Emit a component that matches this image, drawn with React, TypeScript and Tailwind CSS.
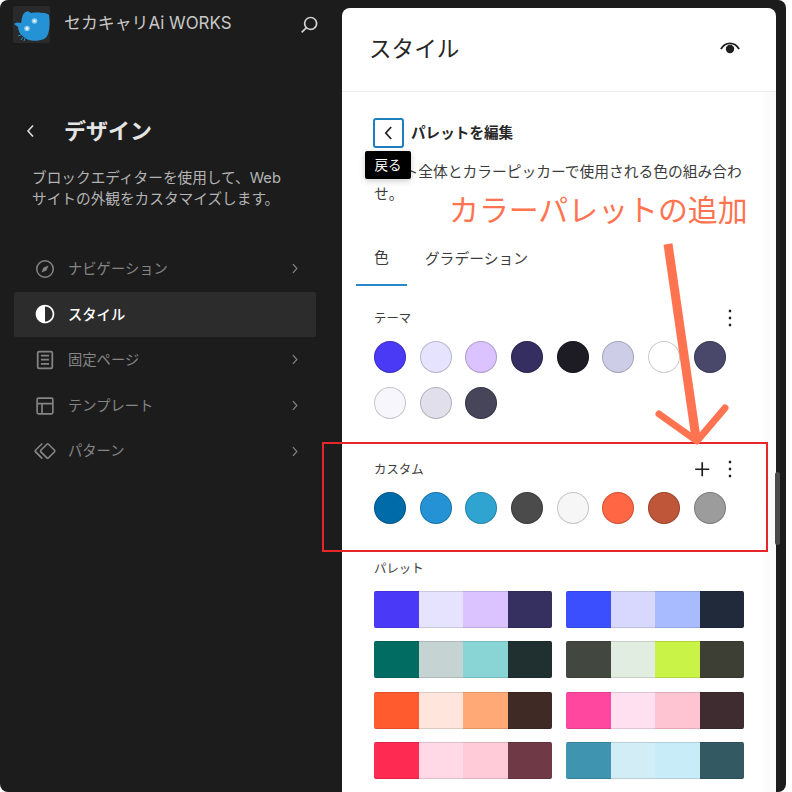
import React from "react";

const P = ({ d, className = "" }: { d: string; className?: string }) => (
  <svg viewBox="0 0 24 24" className={className} fill="currentColor" fillRule="evenodd"><path d={d} /></svg>
);

const CL = "M14.6 7l-1.2-1L8 12l5.4 6 1.2-1-4.6-5z";
const CR = "M10.6 6L9.4 7l4.6 5-4.6 5 1.2 1 5.4-6z";
const MORE = "M13 19h-2v-2h2v2zm0-6h-2v-2h2v2zm0-6h-2V5h2v2z";
const PLUS = "M11 12.5V18H12.5V12.5H18V11H12.5V5.5H11V11H5.5V12.5H11Z";

const navIcons: Record<string, React.ReactNode> = {
  nav: (
    <svg viewBox="0 0 24 24" className="w-6 h-6" fill="none" stroke="currentColor" strokeWidth="1.5">
      <circle cx="12" cy="12" r="8.25" />
      <path d="M15.6 8.4L13.4 13.4L8.4 15.6L10.6 10.6Z" fill="currentColor" stroke="none" />
    </svg>
  ),
  style: <P className="w-7 h-7" d="M12 4c-4.4 0-8 3.6-8 8s3.6 8 8 8 8-3.6 8-8-3.6-8-8-8zm0 14.5c3.6 0 6.5-2.9 6.5-6.5S15.6 5.5 12 5.5v13z" />,
  page: <P className="w-7 h-7" d="M15.5 7.5h-7V9h7V7.5Zm-7 3.5h7v1.5h-7V11Zm7 3.5h-7V16h7v-1.5ZM17 4H7a2 2 0 0 0-2 2v12a2 2 0 0 0 2 2h10a2 2 0 0 0 2-2V6a2 2 0 0 0-2-2Zm-10 1.5h10a.5.5 0 0 1 .5.5v12a.5.5 0 0 1-.5.5H7a.5.5 0 0 1-.5-.5V6a.5.5 0 0 1 .5-.5Z" />,
  layout: <P className="w-[26px] h-[26px]" d="M18 5.5H6a.5.5 0 00-.5.5v3h13V6a.5.5 0 00-.5-.5zm.5 5H10v8h8a.5.5 0 00.5-.5v-7.5zm-10 0h-3V18a.5.5 0 00.5.5h2.5v-8zM6 4h12a2 2 0 012 2v12a2 2 0 01-2 2H6a2 2 0 01-2-2V6a2 2 0 012-2z" />,
  pattern: <P className="w-[26px] h-[26px]" d="M21.3 10.8l-5.6-5.6c-.7-.7-1.8-.7-2.5 0l-5.6 5.6c-.7.7-.7 1.8 0 2.5l5.6 5.6c.3.3.8.5 1.2.5s.9-.2 1.2-.5l5.6-5.6c.8-.7.8-1.9.1-2.5zm-1 1.4l-5.6 5.6c-.1.1-.3.1-.4 0l-5.6-5.6c-.1-.1-.1-.3 0-.4l5.6-5.6s.1-.1.2-.1.1 0 .2.1l5.6 5.6c.1.1.1.3 0 .4zm-16.6-.4L10 5.5l-1-1-6.3 6.3c-.7.7-.7 1.8 0 2.5L9 19.5l1.1-1.1-6.3-6.3c-.2 0-.2-.2-.1-.3z" />,
};

const nav = [
  { k: "nav", t: "ナビゲーション" },
  { k: "style", t: "スタイル", active: true },
  { k: "page", t: "固定ページ" },
  { k: "layout", t: "テンプレート" },
  { k: "pattern", t: "パターン" },
];

const theme = ["#4a3af5", "#e6e3fe", "#dac3ff", "#352f61", "#1d1c24", "#cdcde8", "#ffffff", "#49476a", "#f6f6fc", "#e0dfeb", "#46455a"];
const custom = ["#006ba9", "#2492d4", "#2fa4d1", "#4b4b4b", "#f6f6f6", "#ff6643", "#c05639", "#9c9c9c"];
const palettes = [
  ["#4a3af7", "#e6e3fe", "#dac3ff", "#35305f"],
  ["#3c4fff", "#d8d8ff", "#a9bbff", "#212a3b"],
  ["#016d62", "#c5d4d3", "#89d4d5", "#202f2f"],
  ["#42483f", "#e2ede1", "#c9f346", "#3d3e34"],
  ["#ff5b2e", "#ffe5db", "#ffa976", "#3f2a25"],
  ["#ff479f", "#ffe0f1", "#ffc4d1", "#3e2c31"],
  ["#ff2a52", "#ffd9e5", "#ffcbd8", "#6f3945"],
  ["#3f95b0", "#d2edf6", "#c8edf8", "#335962"],
];

const Swatches = ({ colors }: { colors: string[] }) => (
  <div className="flex flex-wrap gap-x-[13.7px] gap-y-[14px] mt-[11px]">
    {colors.map((c, i) => (
      <div key={i} className="w-8 h-8 rounded-full shadow-[inset_0_0_0_1px_rgba(0,0,0,0.2)]" style={{ backgroundColor: c }} />
    ))}
  </div>
);

const SectionHead = ({ label, plus, more = true }: { label: string; plus?: boolean; more?: boolean }) => (
  <div className="flex items-center justify-between h-6 text-[#3c3c3c]">
    <span className="text-[12.4px] leading-6 pt-[2px]">{label}</span>
    <div className="flex items-center text-[#1e1e1e]">
      {plus && <P className="w-[27px] h-[27px]" d={PLUS} />}
      {more && <P className="w-7 h-7" d={MORE} />}
    </div>
  </div>
);

export default function App() {
  return (
    <div className="relative w-[792px] h-[792px] bg-white overflow-hidden font-['Inter','Noto_Sans_CJK_JP',sans-serif]">
      <div className="w-[786px] h-[792px] rounded-[8px] bg-[#1c1c1c] flex">
        <aside className="w-[342px] shrink-0">
          <div className="h-[48px] flex items-center pl-[13px] pr-[19px]">
            <div className="w-[37px] h-[37px] rounded-[2px] bg-[#2a2a2a] shrink-0">
              <svg viewBox="0 0 37 37" className="w-full h-full">
                <path d="M10 8.5 Q14 3 18 7 C24 6 34 6.5 36 9 C37.5 20 36 31 31 33 C24 36 14 35 11 31 C7 29 5 24 5 21 L1 18 Q3 15.5 8 17 Q9 11 10 8.5Z" fill="#2492d4" />
                <circle cx="21.5" cy="15" r="2.8" fill="#8fcdf0" />
                <circle cx="21.5" cy="15" r="1.2" fill="#fff" />
                <circle cx="14" cy="22.5" r="2.8" fill="#8fcdf0" />
                <circle cx="14" cy="22.5" r="1.2" fill="#fff" />
                <path d="M8 29 L5 30 M10 31 L8 34 M12 32 L11 35" stroke="#2492d4" strokeWidth="1" />
              </svg>
            </div>
            <span className="ml-[14px] text-[16.9px] text-[#c8c8c8] whitespace-nowrap">セカキャリAi WORKS</span>
            <P className="ml-auto w-[27px] h-[27px] text-[#d0d0d0]" d="M13 5c-3.3 0-6 2.7-6 6 0 1.4.5 2.7 1.3 3.7l-3.8 3.8 1.1 1.1 3.8-3.8c1 .8 2.3 1.3 3.7 1.3 3.3 0 6-2.7 6-6S16.3 5 13 5zm0 10.5c-2.5 0-4.5-2-4.5-4.5s2-4.5 4.5-4.5 4.5 2 4.5 4.5-2 4.5-4.5 4.5z" />
          </div>

          <div className="flex items-center mt-[67px] h-8 pl-[19px]">
            <P className="w-6 h-6 text-[#e0e0e0]" d={CL} />
            <h1 className="ml-[21px] text-[22px] font-bold leading-8 text-[#e4e4e4]">デザイン</h1>
          </div>

          <p className="mt-[21px] ml-[32px] w-[270px] text-[14.67px] leading-[20.5px] text-[#b4b4b4]">
            ブロックエディターを使用して、Web
            <br />
            サイトの外観をカスタマイズします。
          </p>

          <nav className="mt-[37px] ml-[14px] w-[302px] flex flex-col">
            {nav.map((n) => (
              <div
                key={n.k}
                className={`h-[45.6px] flex items-center rounded-[2px] ${n.active ? "bg-[#2c2c2c] text-white" : "text-[#858585]"}`}
              >
                <span className="w-[28px] ml-[17px] h-7 flex items-center justify-center shrink-0">{navIcons[n.k]}</span>
                <span className={`ml-[10px] -translate-x-[1px] text-[14.3px] ${n.active ? "font-medium" : ""}`}>{n.t}</span>
                {!n.active && <P className="ml-auto mr-[12px] w-[19px] h-[19px]" d={CR} />}
              </div>
            ))}
          </nav>
        </aside>

        <main className="w-[434px] h-[784px] mt-2 shrink-0 bg-white rounded-t-[8px] overflow-hidden flex flex-col">
          <header className="h-[84px] shrink-0 border-b border-[#ececec] flex items-center justify-between pl-[27px] pr-[32px]">
            <h2 className="text-[22.6px] text-[#262626] leading-8 -mt-[2px]">スタイル</h2>
            <svg viewBox="0 0 24 24" className="w-[28px] h-[28px] text-[#1e1e1e] -mt-[3px]" fill="none" stroke="currentColor">
              <path d="M4.2 13 C6 9.8 8.8 8 12 8 S18 9.8 19.8 13" strokeWidth="1.6" />
              <circle cx="12" cy="12.8" r="3.6" fill="currentColor" stroke="none" />
            </svg>
          </header>
          <div className="flex-1 flex min-h-0">
            <div className="w-[416px] pl-[32px] pr-[14px]">
              <div className="flex items-center mt-[26px] h-[30px]">
                <div className="w-[31px] h-[30px] ml-[-1px] rounded-[3px] border-2 border-[#1f7fbd] flex items-center justify-center text-[#1e1e1e]">
                  <P className="w-[26px] h-[26px] shrink-0" d={CL} />
                </div>
                <h3 className="ml-[7px] mt-[1px] text-[14.6px] font-bold text-[#262626]">パレットを編集</h3>
              </div>
              <p className="mt-[13px] text-[14.75px] leading-[22px] text-[#3c3c3c]">サイト全体とカラーピッカーで使用される色の組み合わせ。</p>
              <div className="flex mt-[26px] -ml-[18px] text-[14.8px] text-[#3c3c3c]">
                <div className="h-[55px] pt-[2px] px-[18px] flex items-center border-b-2 border-[#2a87c8]">色</div>
                <div className="h-[55px] pt-[2px] px-[18px] flex items-center">グラデーション</div>
              </div>

              <div className="mt-[20px]">
                <SectionHead label="テーマ" />
                <Swatches colors={theme} />
              </div>
              <div className="mt-[38px]">
                <SectionHead label="カスタム" plus />
                <Swatches colors={custom} />
              </div>
              <div className="mt-[32px]">
                <SectionHead label="パレット" more={false} />
                <div className="grid grid-cols-2 gap-x-[14px] gap-y-[13.4px] mt-[11px]">
                  {palettes.map((p, i) => (
                    <div key={i} className="flex h-[37px] rounded-[2px] overflow-hidden">
                      {p.map((c, j) => (
                        <div key={j} className="flex-1 shadow-[inset_0_1px_0_rgba(0,0,0,0.12),inset_0_-1px_0_rgba(0,0,0,0.12)]" style={{ backgroundColor: c }} />
                      ))}
                    </div>
                  ))}
                </div>
              </div>
            </div>
            <div className="flex-1 bg-gradient-to-r from-white to-[#f9f9f9]" />
          </div>
        </main>
      </div>

      {/* overlays */}
      <div className="absolute left-[775px] top-[472px] w-[5px] h-[73px] rounded-full bg-[#4a4a4a]" />
      <div className="absolute left-[365px] top-[151px] w-[46px] h-[28px] rounded-[2px] bg-black text-white text-[13.5px] flex items-center justify-center shadow-[0_2px_6px_rgba(0,0,0,0.2)]">戻る</div>
      <div className="absolute left-[449px] top-[190px] text-[29.9px] leading-[40px] text-[#ff7350] whitespace-nowrap">カラーパレットの追加</div>
      <div className="absolute left-[322px] top-[442px] w-[446px] h-[110px] border-2 border-[#e8262a]" />
      <svg className="absolute left-[640px] top-[230px] w-[100px] h-[230px]" viewBox="640 230 100 230" fill="none" stroke="#ff7350" strokeLinecap="round" strokeLinejoin="round">
        <path d="M668 244 L696 438" strokeWidth="9" strokeLinecap="butt" />
        <path d="M659 414 L697 441 L725 408" strokeWidth="7" />
      </svg>
    </div>
  );
}
